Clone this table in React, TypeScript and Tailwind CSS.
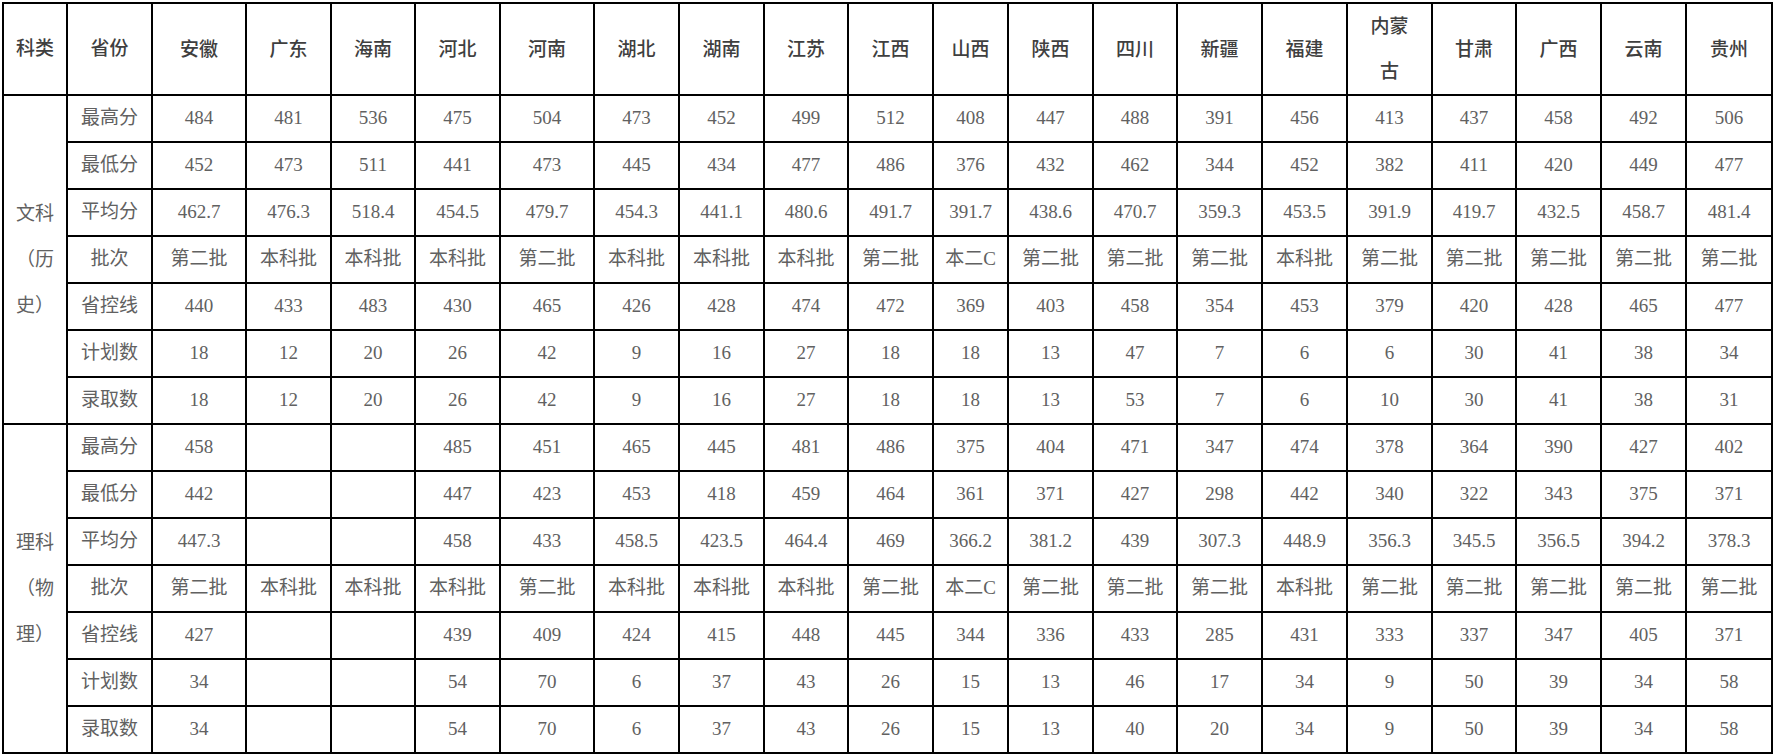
// 各省录取分数统计表（文科 / 理科）

const provinces = [
  "安徽", "广东", "海南", "河北", "河南", "湖北", "湖南", "江苏", "江西", "山西",
  "陕西", "四川", "新疆", "福建", "内蒙古", "甘肃", "广西", "云南", "贵州",
];

// 列宽（px），与原表一致
const colWidths = [64, 85, 94, 85, 84, 85, 94, 85, 85, 84, 85, 75, 85, 84, 85, 85, 85, 84, 85, 85, 86];

type Row = { label: string; values: string[] };

const batchRow = [
  "第二批", "本科批", "本科批", "本科批", "第二批", "本科批", "本科批", "本科批", "第二批", "本二C",
  "第二批", "第二批", "第二批", "本科批", "第二批", "第二批", "第二批", "第二批", "第二批",
];

const wenke: Row[] = [
  { label: "最高分", values: "484 481 536 475 504 473 452 499 512 408 447 488 391 456 413 437 458 492 506".split(" ") },
  { label: "最低分", values: "452 473 511 441 473 445 434 477 486 376 432 462 344 452 382 411 420 449 477".split(" ") },
  { label: "平均分", values: "462.7 476.3 518.4 454.5 479.7 454.3 441.1 480.6 491.7 391.7 438.6 470.7 359.3 453.5 391.9 419.7 432.5 458.7 481.4".split(" ") },
  { label: "批次", values: batchRow },
  { label: "省控线", values: "440 433 483 430 465 426 428 474 472 369 403 458 354 453 379 420 428 465 477".split(" ") },
  { label: "计划数", values: "18 12 20 26 42 9 16 27 18 18 13 47 7 6 6 30 41 38 34".split(" ") },
  { label: "录取数", values: "18 12 20 26 42 9 16 27 18 18 13 53 7 6 10 30 41 38 31".split(" ") },
];

// 广东、海南理科无数据，用 "-" 占位后转成空格
const like: Row[] = [
  { label: "最高分", values: "458 - - 485 451 465 445 481 486 375 404 471 347 474 378 364 390 427 402".split(" ") },
  { label: "最低分", values: "442 - - 447 423 453 418 459 464 361 371 427 298 442 340 322 343 375 371".split(" ") },
  { label: "平均分", values: "447.3 - - 458 433 458.5 423.5 464.4 469 366.2 381.2 439 307.3 448.9 356.3 345.5 356.5 394.2 378.3".split(" ") },
  { label: "批次", values: batchRow },
  { label: "省控线", values: "427 - - 439 409 424 415 448 445 344 336 433 285 431 333 337 347 405 371".split(" ") },
  { label: "计划数", values: "34 - - 54 70 6 37 43 26 15 13 46 17 34 9 50 39 34 58".split(" ") },
  { label: "录取数", values: "34 - - 54 70 6 37 43 26 15 13 40 20 34 9 50 39 34 58".split(" ") },
];

const cell = "border-2 border-black p-0 text-center align-middle";

function Group({ lines, rows }: { lines: string[]; rows: Row[] }) {
  return (
    <>
      {rows.map((row, i) => (
        <tr key={row.label} className="h-[47px]">
          {i === 0 && (
            <td rowSpan={rows.length} className={`${cell} leading-[46px]`}>
              {lines.map((l) => (
                <div key={l}>{l}</div>
              ))}
            </td>
          )}
          <td className={cell}>{row.label}</td>
          {row.values.map((v, j) => (
            <td key={j} className={cell}>
              {v === "-" ? "" : v}
            </td>
          ))}
        </tr>
      ))}
    </>
  );
}

export default function App() {
  return (
    <div className="min-h-screen bg-white pl-[2px] pt-[2px] font-['Liberation_Serif','Noto_Sans_CJK_SC',serif] text-[19px] text-[#616161]">
      <table className="w-[1771px] table-fixed border-collapse border-2 border-black">
        <colgroup>
          {colWidths.map((w, i) => (
            <col key={i} style={{ width: w }} />
          ))}
        </colgroup>
        <thead>
          <tr className="h-[91px] text-[#3f3f3f]">
            <th className={`${cell} font-medium`}>科类</th>
            <th className={`${cell} font-medium`}>省份</th>
            {provinces.map((p) => (
              <th key={p} className={`${cell} font-medium leading-[45px]`}>
                {p === "内蒙古" ? (
                  <>
                    <div>内蒙</div>
                    <div>古</div>
                  </>
                ) : (
                  p
                )}
              </th>
            ))}
          </tr>
        </thead>
        <tbody>
          <Group lines={["文科", "（历", "史）"]} rows={wenke} />
          <Group lines={["理科", "（物", "理）"]} rows={like} />
        </tbody>
      </table>
    </div>
  );
}
